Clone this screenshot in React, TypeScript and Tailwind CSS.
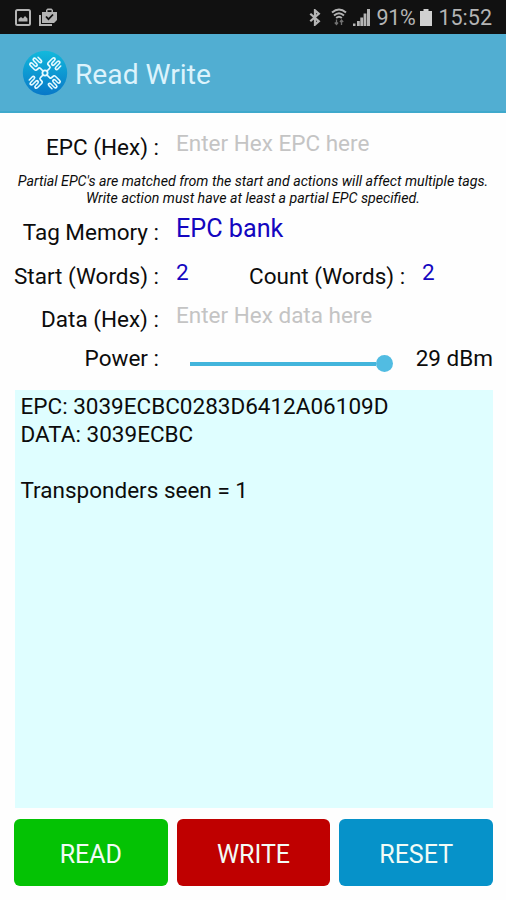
import React from "react";

const arms = [0, 90, 180, 270];

const Logo = () => (
  <svg className="h-[46px] w-[46px]" viewBox="0 0 46 46" fill="none">
    <defs>
      <linearGradient id="logo" x1="0" y1="0" x2="0" y2="1">
        <stop offset="0" stopColor="#12b9dc" />
        <stop offset="1" stopColor="#0878c8" />
      </linearGradient>
    </defs>
    <circle cx="23" cy="23" r="22.2" fill="url(#logo)" />
    <g stroke="#e6faff" strokeWidth="1.8" strokeLinecap="round" strokeLinejoin="round">
      <circle cx="23" cy="23" r="2.6" />
      {arms.map((a) => (
        <path
          key={a}
          transform={`translate(23 23) rotate(${a + 45}) scale(.84 1)`}
          d="M0 -3V-6.500Q0 -8 -2 -8H-4Q-6 -8 -6 -10V-15.500Q-6 -17.300 -4.300 -17.300T-2.600 -15.500V-12.500Q-2.600 -10.800 -.9 -10.800T.8 -12.500V-16.500Q.8 -18.300 2.500 -18.300T4.200 -16.500V-12Q4.200 -10.300 5.800 -10.300T7.400 -12V-16"
        />
      ))}
    </g>
  </svg>
);

const StatusBar = () => (
  <div className="flex h-[34px] items-center bg-[#111] pr-[14px] pl-[15px] text-[#b4b4b4]">
    <svg className="h-[17px] w-4" viewBox="0 0 16 17">
      <rect x="1" y="1" width="14" height="15" rx="1.5" fill="none" stroke="currentColor" strokeWidth="2" />
      <path d="M3.5 12.5V10L6 8l2 1.5L10 7l2.500 2.500v3z" fill="currentColor" />
    </svg>
    <svg className="ml-2 h-[18px] w-[18px]" viewBox="0 0 18 18">
      <path d="M1 7v10h12" fill="none" stroke="currentColor" strokeWidth="2" />
      <path d="M3 4h4V2l1.500-1.500h4L14 2v2h4v8l-3 3H3z" fill="currentColor" />
      <path d="M8.500 2.200h4V4h-4z" fill="#111" />
      <path d="M7 8.500l2.500 2.700L14 6.500" fill="none" stroke="#111" strokeWidth="1.800" />
    </svg>
    <svg className="ml-auto h-[17px] w-3" viewBox="0 0 12 18" fill="none" stroke="currentColor" strokeWidth="2.400">
      <path d="M1 5l9 8-4 3.500v-15L10 5l-9 8" />
    </svg>
    <svg className="ml-[10px] h-[18px] w-4" viewBox="0 0 16 18" fill="none" stroke="currentColor" strokeWidth="2">
      <path d="M1 4.500Q8-1.500 15 4.500M3 7.500Q8 3 13 7.500M5.200 10Q8 7.500 10.800 10" />
      <path d="M5.500 11.500v5M3.800 14.500l1.700 2 1.500-2M10.500 17v-5M9 14l1.500-2 1.700 2" strokeWidth="1.300" opacity=".6" />
    </svg>
    <svg className="ml-[6px] h-[17px] w-[17px]" viewBox="0 0 17 17" fill="currentColor">
      <path d="M0 14.500h2.500v2.500H0zM4 12h2.800v5H4zM7.300 8.500h2.800V17H7.300zM10.600 4.500h2.800V17h-2.800zM14 0h3v17h-3z" />
    </svg>
    <span className="ml-[6px] w-[40px] pt-px text-[21.500px] leading-none tracking-[-0.3px] whitespace-nowrap">91%</span>
    <svg className="ml-1 h-[17px] w-3" viewBox="0 0 12 17" fill="#d0d0d0">
      <path d="M3.500 0h5v2H12v15H0V2h3.500z" />
    </svg>
    <span className="ml-[6px] pt-px text-[21.500px] leading-none whitespace-nowrap">15:52</span>
  </div>
);

const Label = ({ children }: { children: React.ReactNode }) => (
  <label className="w-[160px] shrink-0 pr-px text-right">{children}</label>
);

const App = () => {
  return (
    <div className="flex h-[900px] w-[506px] flex-col overflow-hidden bg-[#fefefe] font-['Roboto',sans-serif] text-[22.5px] leading-[28px] whitespace-nowrap text-[#0c0c0c]">
      <StatusBar />
      <header className="flex h-[79px] items-center border-b-2 border-[#3fa9cc] bg-[#51aed2] pt-px pl-[22px]">
        <Logo />
        <h1 className="ml-[7px] pt-[4px] text-[28.2px] text-[#dcf3fc]">Read Write</h1>
      </header>

      <div className="flex h-[60px] pt-5">
        <Label>EPC (Hex) :</Label>
        <span className="-mt-1 ml-4 text-[#c4c4c4]">Enter Hex EPC here</span>
      </div>
      <p className="h-[45px] text-center text-[14.2px] leading-[17px] italic">
        Partial EPC's are matched from the start and actions will affect multiple tags.
        <br />
        Write action must have at least a partial EPC specified.
      </p>
      <div className="flex h-[44px]">
        <Label>Tag Memory :</Label>
        <span className="-mt-[3px] ml-4 text-[25.2px] text-[#1406c0]">EPC bank</span>
      </div>
      <div className="flex h-[43px]">
        <Label>Start (Words) :</Label>
        <span className="-mt-1 ml-4 w-[73px] text-[#1406c0]">2</span>
        <span className="w-[157px]">Count (Words) :</span>
        <span className="-mt-1 ml-4 text-[#1406c0]">2</span>
      </div>
      <div className="flex h-[39px]">
        <Label>Data (Hex) :</Label>
        <span className="-mt-1 ml-4 text-[#c4c4c4]">Enter Hex data here</span>
      </div>
      <div className="flex h-[46px]">
        <Label>Power :</Label>
        <div className="mt-[11px] ml-[30px] flex h-[17px] w-[203px] items-center">
          <div className="h-1 grow bg-[#43b5dc]" />
          <div className="h-[17px] w-[17px] rounded-full bg-[#51bce2]" />
        </div>
        <span className="mr-[13px] ml-auto">29 dBm</span>
      </div>

      <div className="mr-[13px] ml-[15px] h-[418px] bg-[#dffeff] px-[5.5px] pt-[2px] whitespace-pre">
        {"EPC: 3039ECBC0283D6412A06109D\nDATA: 3039ECBC\n\nTransponders seen = 1"}
      </div>

      <div className="mt-[11px] mr-[13px] ml-[14px] grid h-[67px] grid-cols-3 gap-[9px] text-[25px] text-[#f2fbf6]">
        <button className="rounded-[6px] bg-[#04c204] pt-[5px]">READ</button>
        <button className="rounded-[6px] bg-[#bf0000] pt-[5px]">WRITE</button>
        <button className="rounded-[6px] bg-[#0692c9] pt-[5px]">RESET</button>
      </div>
    </div>
  );
};

export default App;
